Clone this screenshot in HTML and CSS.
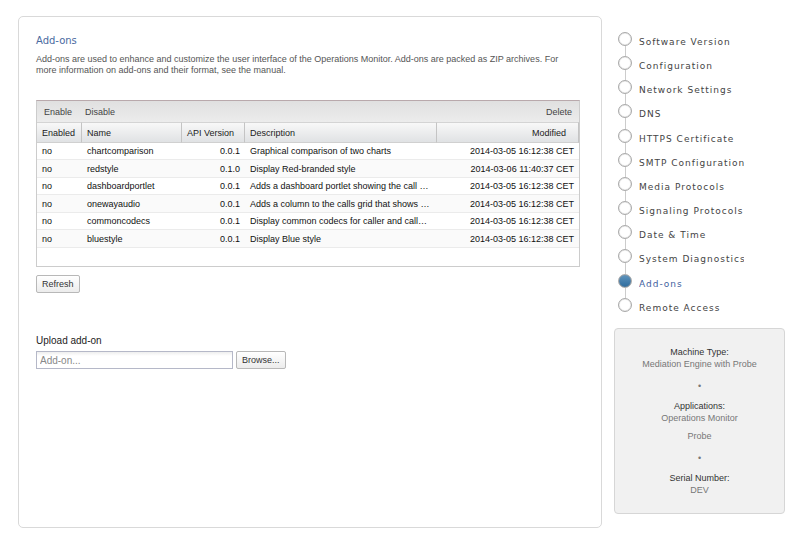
FILE: index.html
```html
<!DOCTYPE html>
<html lang="en">
<head>
    <meta charset="UTF-8">
    <title>Operations Monitor - Add-ons</title>
    <link rel="stylesheet" href="styles.css">
</head>
<body>

    <main class="panel">
        <h1>Add-ons</h1>
        <p class="intro">
            Add-ons are used to enhance and customize the user interface of the Operations Monitor. Add-ons are packed as ZIP archives. For more information on add-ons and their format, see the manual.
        </p>

        <div class="grid">
            <div class="toolbar">
                <button type="button">Enable</button>
                <button type="button">Disable</button>
                <button type="button" class="delete">Delete</button>
            </div>
            <table>
                <colgroup>
                    <col class="col-enabled">
                    <col class="col-name">
                    <col class="col-version">
                    <col class="col-description">
                    <col class="col-modified">
                </colgroup>
                <thead>
                    <tr>
                        <th>Enabled</th>
                        <th>Name</th>
                        <th>API Version</th>
                        <th>Description</th>
                        <th class="modified">Modified</th>
                    </tr>
                </thead>
                <tbody>
                    <tr><td>no</td><td>chartcomparison</td><td class="num">0.0.1</td><td>Graphical comparison of two charts</td><td class="num">2014-03-05 16:12:38 CET</td></tr>
                    <tr><td>no</td><td>redstyle</td><td class="num">0.1.0</td><td>Display Red-branded style</td><td class="num">2014-03-06 11:40:37 CET</td></tr>
                    <tr><td>no</td><td>dashboardportlet</td><td class="num">0.0.1</td><td>Adds a dashboard portlet showing the call …</td><td class="num">2014-03-05 16:12:38 CET</td></tr>
                    <tr><td>no</td><td>onewayaudio</td><td class="num">0.0.1</td><td>Adds a column to the calls grid that shows …</td><td class="num">2014-03-05 16:12:38 CET</td></tr>
                    <tr><td>no</td><td>commoncodecs</td><td class="num">0.0.1</td><td>Display common codecs for caller and call…</td><td class="num">2014-03-05 16:12:38 CET</td></tr>
                    <tr><td>no</td><td>bluestyle</td><td class="num">0.0.1</td><td>Display Blue style</td><td class="num">2014-03-05 16:12:38 CET</td></tr>
                </tbody>
            </table>
        </div>

        <button type="button" class="btn">Refresh</button>

        <form class="upload">
            <label for="addon">Upload add-on</label>
            <div class="upload-row">
                <input type="text" id="addon" placeholder="Add-on...">
                <button type="button" class="btn">Browse...</button>
            </div>
        </form>
    </main>

    <aside class="sidebar">
        <nav>
            <ul class="steps">
                <li><a href="#">Software Version</a></li>
                <li><a href="#">Configuration</a></li>
                <li><a href="#">Network Settings</a></li>
                <li><a href="#">DNS</a></li>
                <li><a href="#">HTTPS Certificate</a></li>
                <li><a href="#">SMTP Configuration</a></li>
                <li><a href="#">Media Protocols</a></li>
                <li><a href="#">Signaling Protocols</a></li>
                <li><a href="#">Date &amp; Time</a></li>
                <li><a href="#">System Diagnostics</a></li>
                <li class="active"><a href="#">Add-ons</a></li>
                <li><a href="#">Remote Access</a></li>
            </ul>
        </nav>

        <div class="info">
            <h2>Machine Type:</h2>
            <p>Mediation Engine with Probe</p>
            <div class="dot">•</div>
            <h2>Applications:</h2>
            <p>Operations Monitor</p>
            <p class="next">Probe</p>
            <div class="dot">•</div>
            <h2>Serial Number:</h2>
            <p>DEV</p>
        </div>
    </aside>

</body>
</html>
```
FILE: styles.css
```css
* {
    box-sizing: border-box;
}

body {
    display: flex;
    gap: 12px;
    min-height: 100vh;
    margin: 0;
    padding: 16px 15px 18px 18px;
    background: #fff;
    font: 9px/12px "Liberation Sans", Arial, sans-serif;
    color: #222;
}

h1, h2, p, ul {
    margin: 0;
    padding: 0;
    font-weight: normal;
}

button, input {
    font: inherit;
    color: inherit;
}

.panel {
    flex: 1;
    min-width: 0;
    padding: 17px 21px 16px 17px;
    border: 1px solid #d9d9d9;
    border-radius: 5px;
}

h1 {
    font: 10px/14px "DejaVu Sans", Verdana, sans-serif;
    color: #4a6a9f;
}

.intro {
    margin: 6px 0 24px;
    line-height: 11px;
    color: #555;
}

/* add-on list */
.grid {
    margin-bottom: 8px;
    padding-bottom: 18px;
    border: 1px solid #ccc;
    border-top-color: #b9a9ac;
}

.toolbar {
    display: flex;
    gap: 13px;
    height: 21px;
    padding: 0 7px;
    background: linear-gradient(#e0e0e0, #ececec);
}

.toolbar button {
    padding: 0;
    border: 0;
    background: none;
    color: #444;
}

.toolbar .delete {
    margin-left: auto;
}

table {
    width: 100%;
    table-layout: fixed;
    border-collapse: separate;
    border-spacing: 0;
}

.col-enabled { width: 45px; }
.col-name { width: 100px; }
.col-version { width: 63px; }
.col-description { width: 192px; }

th, td {
    padding: 0 5px;
    overflow: hidden;
    white-space: nowrap;
    text-align: left;
    font-weight: normal;
}

th {
    height: 21px;
    border-top: 1px solid #d4d4d4;
    border-right: 1px solid #c4c4c4;
    border-bottom: 1px solid #d0d0d0;
    background: linear-gradient(#f8f8f8, #e0e2e4);
}

.modified {
    padding-right: 12px;
    text-align: right;
}

td {
    height: 17px;
    border-bottom: 1px solid #ebebeb;
    color: #111;
}

tr:nth-child(even) td {
    height: 18px;
    background: #fafafa;
}

.num {
    padding-right: 5px;
    text-align: right;
}

.btn {
    height: 18px;
    padding: 0 5px;
    border: 1px solid #b8b8b8;
    border-radius: 2px;
    background: linear-gradient(#fff, #ececec);
    color: #333;
}

/* upload form */
.upload {
    margin-top: 42px;
    font-size: 10px;
}

.upload label {
    display: block;
    margin-bottom: 4px;
}

.upload-row {
    display: flex;
    gap: 3px;
}

.upload input {
    width: 197px;
    height: 18px;
    padding: 0 3px;
    border: 1px solid #b5b8c8;
    background: linear-gradient(#eee, #fff 4px);
}

.upload input::placeholder {
    color: #888;
}

.upload .btn {
    font-size: 9px;
}

/* right column */
.sidebar {
    width: 171px;
}

.steps {
    display: grid;
    grid-auto-rows: 1fr;
    min-height: 306px;
    padding: 16px 0 0 4px;
    list-style: none;
    font: 9px/20px "DejaVu Sans", Verdana, sans-serif;
    letter-spacing: 1px;
}

.steps li {
    display: grid;
    grid-template: 14px 1fr / 14px 105px;
    column-gap: 7px;
}

.steps li::before {
    content: "";
    border: 1px solid #aaa;
    border-radius: 50%;
    box-shadow: inset 0 0 1px #999;
}

.steps li::after {
    content: "";
    grid-area: 2 / 1;
    width: 1px;
    margin-left: 7px;
    background: #ccc;
}

.steps li:last-child::after {
    background: none;
}

.steps a {
    grid-area: 1 / 2 / 3;
    overflow: hidden;
    white-space: nowrap;
    color: #444;
    text-decoration: none;
}

.steps .active::before {
    background: linear-gradient(#5f94bd, #2e6c9e);
}

.steps .active a {
    color: #3f62a0;
}

.info {
    margin-top: 6px;
    padding: 17px 10px;
    border: 1px solid #d6d6d6;
    border-radius: 4px;
    background: #f1f1f1;
    text-align: center;
    color: #777;
}

.info h2 {
    font-size: 9px;
    line-height: 12px;
    color: #333;
}

.info .next {
    margin-top: 6px;
}

.dot {
    margin: 10px 0 8px;
}
```
